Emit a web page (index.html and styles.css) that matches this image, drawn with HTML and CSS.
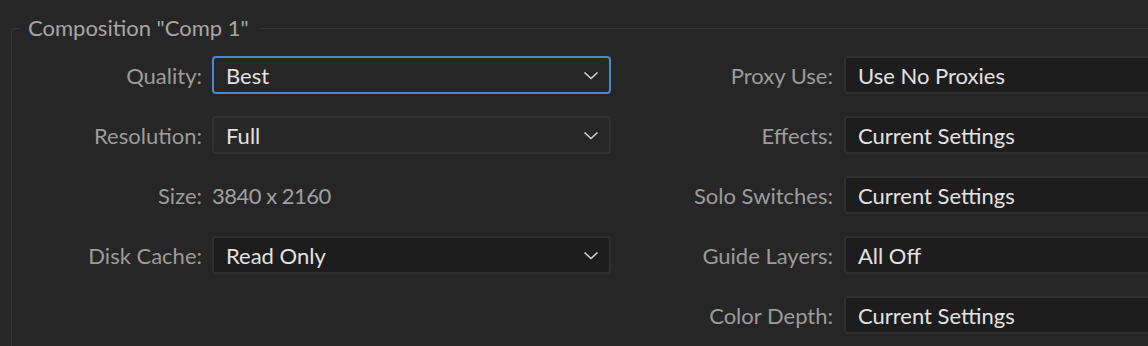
FILE: index.html
```html
<!DOCTYPE html>
<html>
<head>
<meta charset="utf-8">
<link rel="stylesheet" href="styles.css">
</head>
<body>
<fieldset class="group">
  <legend class="group-title">Composition "Comp 1"</legend>
  <div class="columns">
    <div class="form form-left">
      <label class="label">Quality:</label>
      <div class="select select-focus"><span class="value">Best</span><svg class="chev" width="16" height="9" viewBox="0 0 16 9"><path d="M1.5 1.5 L8 7.5 L14.5 1.5" fill="none" stroke="#cfcfcf" stroke-width="1.6"/></svg></div>

      <label class="label">Resolution:</label>
      <div class="select"><span class="value">Full</span><svg class="chev" width="16" height="9" viewBox="0 0 16 9"><path d="M1.5 1.5 L8 7.5 L14.5 1.5" fill="none" stroke="#cfcfcf" stroke-width="1.6"/></svg></div>

      <label class="label">Size:</label>
      <div class="static">3840 x 2160</div>

      <label class="label">Disk Cache:</label>
      <div class="select select-dark"><span class="value">Read Only</span><svg class="chev" width="16" height="9" viewBox="0 0 16 9"><path d="M1.5 1.5 L8 7.5 L14.5 1.5" fill="none" stroke="#cfcfcf" stroke-width="1.6"/></svg></div>
    </div>
    <div class="form form-right">
      <label class="label">Proxy Use:</label>
      <div class="select select-dark select-cut"><span class="value">Use No Proxies</span></div>

      <label class="label">Effects:</label>
      <div class="select select-dark select-cut"><span class="value">Current Settings</span></div>

      <label class="label">Solo Switches:</label>
      <div class="select select-dark select-cut"><span class="value">Current Settings</span></div>

      <label class="label">Guide Layers:</label>
      <div class="select select-dark select-cut"><span class="value">All Off</span></div>

      <label class="label">Color Depth:</label>
      <div class="select select-dark select-cut"><span class="value">Current Settings</span></div>
    </div>
  </div>
</fieldset>
</body>
</html>
```

FILE: styles.css
```css
html, body {
  margin: 0;
  padding: 0;
  background: #262626;
  overflow: hidden;
  width: 1148px;
  height: 346px;
}

body {
  font-family: Lato, "Open Sans", sans-serif;
  font-size: 22px;
  color: #9c9c9c;
}

.group {
  margin: 16px 0 0 11px;
  padding: 0 0 20px 0;
  border: 1px solid #353535;
  border-right: none;
  border-radius: 4px 0 0 0;
  min-width: 0;
}

.group-title {
  padding: 0 10px 0 8px;
  margin-left: 8px;
  color: #a6a6a6;
  line-height: 24px;
}

.columns {
  display: flex;
  padding-top: 16px;
}

.form {
  display: grid;
  grid-auto-rows: 38px;
  row-gap: 22px;
  column-gap: 10px;
  align-items: center;
}

.form-left {
  grid-template-columns: 190px 399px;
}

.form-right {
  flex: 1;
  grid-template-columns: 222px 1fr;
  column-gap: 11px;
}

.label {
  text-align: right;
  white-space: nowrap;
}

.select {
  box-sizing: border-box;
  height: 38px;
  display: flex;
  align-items: center;
  justify-content: space-between;
  padding: 0 10px 0 12px;
  border: 2px solid #313131;
  border-radius: 4px;
  background: #272727;
  color: #e2e2e2;
}

.select-dark {
  background: #1d1d1d;
  border-color: #2f2f2f;
}

.select-cut {
  border-right: none;
  border-radius: 4px 0 0 4px;
}

.select-focus {
  border-color: #4a85d6;
  background: #262626;
}

.chev {
  display: block;
}

.static {
  color: #a0a0a0;
  letter-spacing: -0.5px;
}
```
